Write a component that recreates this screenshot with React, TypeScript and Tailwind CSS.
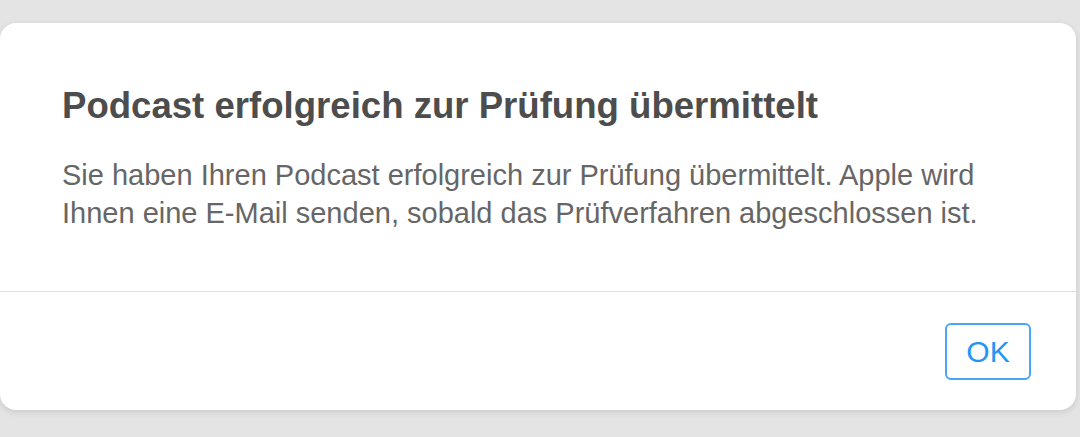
export default function App() {
  return (
    <div className="h-[437px] w-[1080px] overflow-hidden bg-[#e4e4e4] pt-[23px] pr-[4px] font-['Liberation_Sans',Arial,sans-serif]">
      <div className="flex h-[387px] flex-col rounded-[16px] bg-white shadow-[0_2px_6px_rgba(0,0,0,0.12)]">
        <div className="h-[269px] border-b border-[#e0e0e0] px-[62px] pt-[61px]">
          <h1 className="text-[36.6px] font-bold leading-[44px] text-[#4d4d4d]">
            Podcast erfolgreich zur Prüfung übermittelt
          </h1>
          <p className="mt-[28px] text-[29px] leading-[38px] text-[#666666]">
            Sie haben Ihren Podcast erfolgreich zur Prüfung übermittelt. Apple wird
            <br />
            Ihnen eine E-Mail senden, sobald das Prüfverfahren abgeschlossen ist.
          </p>
        </div>
        <div className="flex flex-1 items-center justify-end pr-[45px]">
          <button className="h-[57px] w-[86px] rounded-[6px] border-2 border-[#49a6f5] text-[30px] text-[#2196f3]">
            OK
          </button>
        </div>
      </div>
    </div>
  );
}
